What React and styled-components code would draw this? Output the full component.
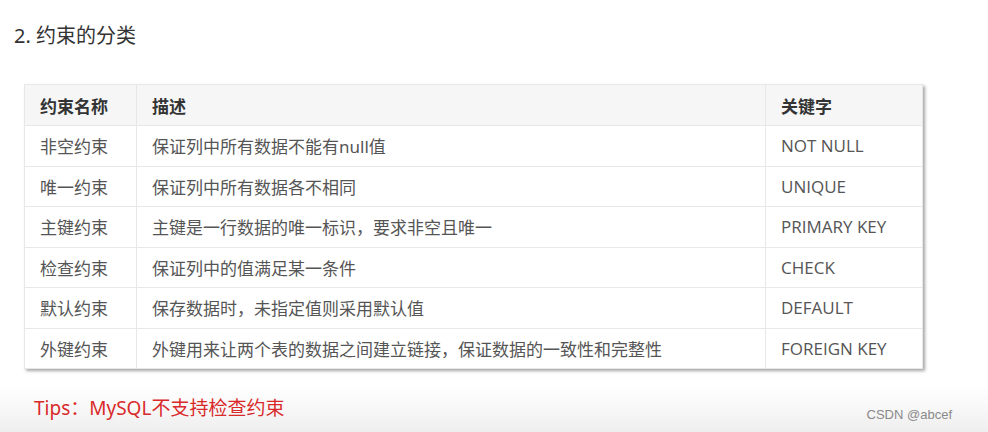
import styled, { createGlobalStyle } from 'styled-components';

const GlobalStyle = createGlobalStyle`
  html, body {
    margin: 0;
    padding: 0;
  }
  body {
    font-family: "Noto Sans", "Noto Sans CJK SC", sans-serif;
  }
`;

const rows = [
  ['非空约束', '保证列中所有数据不能有null值', 'NOT NULL'],
  ['唯一约束', '保证列中所有数据各不相同', 'UNIQUE'],
  ['主键约束', '主键是一行数据的唯一标识，要求非空且唯一', 'PRIMARY KEY'],
  ['检查约束', '保证列中的值满足某一条件', 'CHECK'],
  ['默认约束', '保存数据时，未指定值则采用默认值', 'DEFAULT'],
  ['外键约束', '外键用来让两个表的数据之间建立链接，保证数据的一致性和完整性', 'FOREIGN KEY'],
];

function App() {
  return (
    <>
      <GlobalStyle />
      <Page>
        <Title>2. 约束的分类</Title>
        <Table>
          <thead>
            <tr>
              <HeadCell width={112}>约束名称</HeadCell>
              <HeadCell>描述</HeadCell>
              <HeadCell width={157}>关键字</HeadCell>
            </tr>
          </thead>
          <tbody>
            {rows.map((row) => (
              <tr key={row[0]}>
                <Cell>{row[0]}</Cell>
                <Cell>{row[1]}</Cell>
                <Cell latin>{row[2]}</Cell>
              </tr>
            ))}
          </tbody>
        </Table>
        <Tips>Tips：MySQL不支持检查约束</Tips>
        <Watermark>CSDN @abcef</Watermark>
      </Page>
    </>
  );
}

const Page = styled.div`
  position: relative;
  box-sizing: border-box;
  width: 988px;
  height: 432px;
  overflow: hidden;
  padding: 22px 0 0 24px;
  background: linear-gradient(to bottom, #ffffff 0px, #ffffff 385px, #f7f7f7 410px, #eeeeee 432px);
`;

const Title = styled.h2`
  margin: 0 0 0 -10px;
  font-size: 20px;
  font-weight: 400;
  line-height: 28px;
  color: #333333;
`;

const Table = styled.table`
  margin-top: 34px;
  width: 899px;
  border-collapse: collapse;
  box-shadow: 2px 2px 3px rgba(0, 0, 0, 0.35);
  background: #ffffff;
`;

const HeadCell = styled.th`
  box-sizing: border-box;
  width: ${(props) => (props.width ? `${props.width}px` : 'auto')};
  height: 41px;
  padding: 0 15px;
  text-align: left;
  font-size: 17px;
  font-weight: 700;
  color: #333333;
  background: #f6f6f6;
  border: 1px solid #e8e8e8;
`;

const Cell = styled.td`
  box-sizing: border-box;
  height: 40.5px;
  padding: 0 15px;
  font-size: 17px;
  color: #555555;
  border: 1px solid #e8e8e8;
  font-family: ${(props) =>
    props.latin ? '"Open Sans", "Noto Sans", sans-serif' : '"Noto Sans", "Noto Sans CJK SC", sans-serif'};
`;

const Tips = styled.div`
  margin: 26px 0 0 10px;
  font-size: 19px;
  line-height: 26px;
  color: #d92a2a;
`;

const Watermark = styled.span`
  position: absolute;
  right: 36px;
  bottom: 10px;
  font-family: "Liberation Sans", Arial, sans-serif;
  font-size: 13px;
  color: #8a8a8a;
`;

export default App;
